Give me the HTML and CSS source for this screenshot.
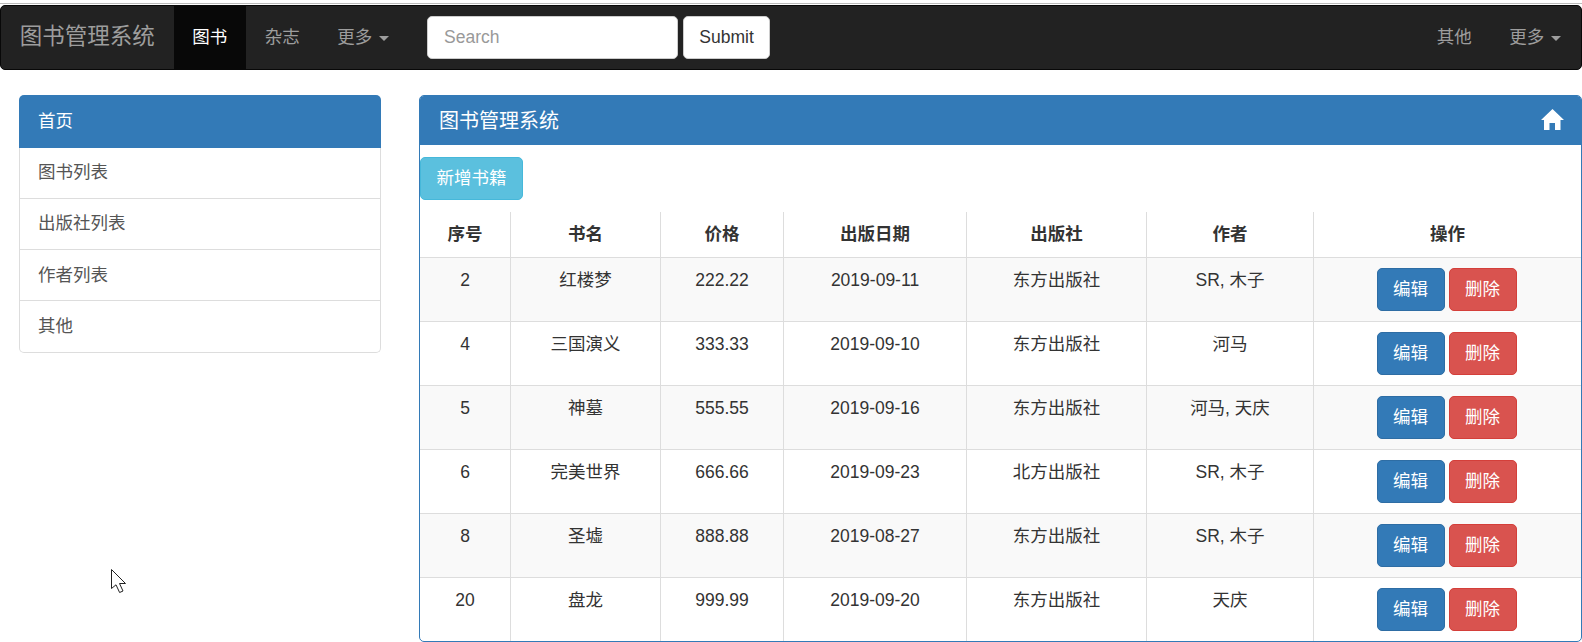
FILE: index.html
```html
<!DOCTYPE html>
<html lang="zh-CN">
<head>
<meta charset="utf-8">
<title>图书管理系统</title>
<link rel="stylesheet" href="styles.css">
</head>
<body>
<div class="topline"></div>
<nav class="navbar">
  <a class="brand">图书管理系统</a>
  <a class="nav-link active">图书</a>
  <a class="nav-link">杂志</a>
  <a class="nav-link">更多<span class="caret"></span></a>
  <form class="nav-form">
    <input class="search" type="text" placeholder="Search">
    <button class="submit" type="button">Submit</button>
  </form>
  <div class="nav-right">
    <a class="nav-link">其他</a>
    <a class="nav-link">更多<span class="caret"></span></a>
  </div>
</nav>
<div class="content">
  <aside class="side">
    <div class="side-head">首页</div>
    <a class="side-item">图书列表</a>
    <a class="side-item">出版社列表</a>
    <a class="side-item lower">作者列表</a>
    <a class="side-item lower last">其他</a>
  </aside>
  <main class="panel">
    <div class="panel-head">
      <h3 class="panel-title">图书管理系统</h3>
      <svg class="home" viewBox="0 0 23 21" width="23" height="21"><path d="M11.5 0 L23 11 H19.5 V21 H14 V14 H8.5 V21 H3 V11 H0 Z" fill="#fff"/></svg>
    </div>
    <div class="panel-body">
      <button class="btn btn-info add" type="button">新增书籍</button>
      <table class="books">
        <colgroup>
          <col class="c1"><col class="c2"><col class="c3"><col class="c4"><col class="c5"><col class="c6"><col class="c7">
        </colgroup>
        <thead>
          <tr><th>序号</th><th>书名</th><th>价格</th><th>出版日期</th><th>出版社</th><th>作者</th><th>操作</th></tr>
        </thead>
        <tbody>
          <tr><td>2</td><td>红楼梦</td><td>222.22</td><td>2019-09-11</td><td>东方出版社</td><td>SR, 木子</td><td><button class="btn btn-primary" type="button">编辑</button><button class="btn btn-danger" type="button">删除</button></td></tr>
          <tr><td>4</td><td>三国演义</td><td>333.33</td><td>2019-09-10</td><td>东方出版社</td><td>河马</td><td><button class="btn btn-primary" type="button">编辑</button><button class="btn btn-danger" type="button">删除</button></td></tr>
          <tr><td>5</td><td>神墓</td><td>555.55</td><td>2019-09-16</td><td>东方出版社</td><td>河马, 天庆</td><td><button class="btn btn-primary" type="button">编辑</button><button class="btn btn-danger" type="button">删除</button></td></tr>
          <tr><td>6</td><td>完美世界</td><td>666.66</td><td>2019-09-23</td><td>北方出版社</td><td>SR, 木子</td><td><button class="btn btn-primary" type="button">编辑</button><button class="btn btn-danger" type="button">删除</button></td></tr>
          <tr><td>8</td><td>圣墟</td><td>888.88</td><td>2019-08-27</td><td>东方出版社</td><td>SR, 木子</td><td><button class="btn btn-primary" type="button">编辑</button><button class="btn btn-danger" type="button">删除</button></td></tr>
          <tr><td>20</td><td>盘龙</td><td>999.99</td><td>2019-09-20</td><td>东方出版社</td><td>天庆</td><td><button class="btn btn-primary" type="button">编辑</button><button class="btn btn-danger" type="button">删除</button></td></tr>
        </tbody>
      </table>
    </div>
  </main>
</div>
<svg class="cursor" viewBox="0 0 16 25" width="16" height="25"><path d="M0.5 0.5 V19.5 L5 15.8 L8.6 23.5 L12 22 L8.5 14.5 H14.5 Z" fill="#fff" stroke="#222" stroke-width="1"/></svg>
</body>
</html>
```

FILE: styles.css
```css
* {
  box-sizing: border-box;
}

html,
body {
  margin: 0;
  height: 642px;
  overflow: hidden;
}

body {
  position: relative;
  background: #fff;
  color: #333;
  font-family: "Liberation Sans", "Noto Sans CJK SC", sans-serif;
  font-size: 17.5px;
  line-height: 25px;
}

.topline {
  height: 1px;
  margin: 3px 0 1px;
  background: #bbb;
}

/* Navbar */
.navbar {
  display: flex;
  align-items: stretch;
  height: 65px;
  background: #222;
  border: 1px solid #080808;
  border-radius: 5px;
}

.brand {
  padding: 0 18.75px;
  color: #9d9d9d;
  font-size: 22.5px;
  line-height: 62px;
}

.nav-link {
  padding: 0 18.75px;
  color: #9d9d9d;
  line-height: 62px;
}

.nav-link.active {
  background: #080808;
  color: #fff;
}

.caret {
  display: inline-block;
  margin-left: 7px;
  vertical-align: middle;
  border-top: 5px solid #9d9d9d;
  border-left: 5px solid transparent;
  border-right: 5px solid transparent;
}

.nav-form {
  display: flex;
  align-items: flex-start;
  gap: 5px;
  margin-left: 19px;
  padding-top: 10px;
}

.search {
  width: 251px;
  height: 43px;
  padding: 0 16px;
  background: #fff;
  border: 1px solid #ccc;
  border-radius: 5px;
  color: #555;
  font: inherit;
}

.search::placeholder {
  color: #999;
}

.submit {
  width: 87px;
  height: 43px;
  padding: 0;
  background: #fff;
  border: 1px solid #ccc;
  border-radius: 5px;
  color: #333;
  font: inherit;
}

.nav-right {
  display: flex;
  margin-left: auto;
  margin-right: 1px;
}

/* Page body */
.content {
  display: flex;
  align-items: flex-start;
  gap: 38px;
  padding-left: 19px;
  margin-top: 25px;
}

.side {
  flex: none;
  width: 362px;
}

.side-head {
  height: 53px;
  padding: 14px 19px;
  background: #337ab7;
  border-radius: 5px 5px 0 0;
  color: #fff;
}

.side-item {
  display: block;
  height: 51px;
  padding: 12px 18px;
  border: 1px solid #ddd;
  border-top: 0;
  color: #555;
}

.side-item.lower {
  padding-top: 13px;
}

.side-item.last {
  height: 52px;
  border-radius: 0 0 5px 5px;
}

.panel {
  flex: 1;
  height: 547px;
  overflow: hidden;
  border: 1px solid #337ab7;
  border-radius: 5px;
}

.panel-head {
  display: flex;
  align-items: center;
  justify-content: space-between;
  height: 49px;
  padding: 0 17px 0 19px;
  background: #337ab7;
  color: #fff;
}

.panel-title {
  margin: 0;
  font-size: 20px;
  font-weight: 400;
  line-height: 22px;
}

.home {
  display: block;
  margin-bottom: 2px;
}

.panel-body {
  padding-top: 12px;
}

.btn {
  height: 43px;
  padding: 0;
  border: 1px solid transparent;
  border-radius: 5px;
  color: #fff;
  font: inherit;
}

.btn-info {
  background: #5bc0de;
  border-color: #46b8da;
}

.btn-primary {
  width: 68px;
  background: #337ab7;
  border-color: #2e6da4;
}

.btn-danger {
  width: 68px;
  margin-left: 4px;
  background: #d9534f;
  border-color: #d43f3a;
}

.add {
  display: block;
  width: 103px;
  margin: 0 0 12px;
}

.books {
  width: 1161px;
  table-layout: fixed;
  border-collapse: separate;
  border-spacing: 0;
}

.c1 { width: 91px; }
.c2 { width: 150px; }
.c3 { width: 123px; }
.c4 { width: 183px; }
.c5 { width: 180px; }
.c6 { width: 167px; }
.c7 { width: 267px; }

.books th,
.books td {
  padding: 10px 5px;
  text-align: center;
  vertical-align: top;
  border-right: 1px solid #ddd;
  border-bottom: 1px solid #ddd;
}

.books th {
  height: 46px;
  font-weight: 700;
}

.books td {
  height: 64px;
}

.books th:last-child,
.books td:last-child {
  border-right: 0;
}

.books td:last-child {
  padding-right: 7px;
}

.books tbody tr:nth-child(odd) td {
  background: #f9f9f9;
}

.books tbody tr:last-child td {
  border-bottom: 0;
}

.cursor {
  position: absolute;
  left: 111px;
  top: 569px;
}
```
